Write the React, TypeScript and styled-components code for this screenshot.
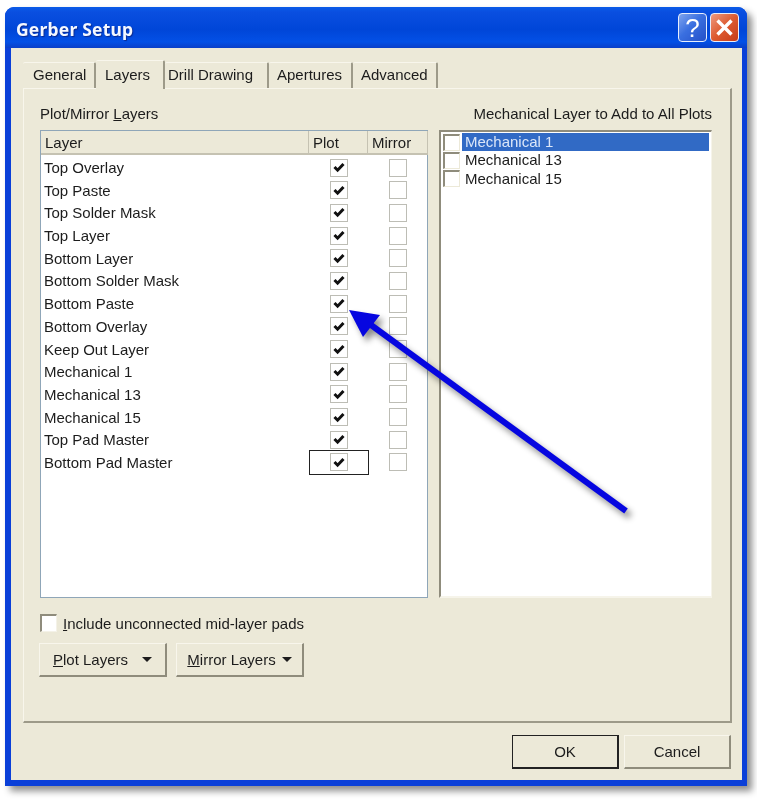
import React from 'react';
import styled, { createGlobalStyle } from 'styled-components';

const FONT = `"Liberation Sans", "DejaVu Sans", sans-serif`;

const GlobalStyle = createGlobalStyle`
  html, body {
    margin: 0;
    background: #ffffff;
  }
`;

const Page = styled.div`
  width: 757px;
  height: 799px;
  padding: 7px 10px 13px 5px;
  box-sizing: border-box;
  overflow: hidden;
  font-family: ${FONT};
  font-size: 15px;
  color: #1c1c1c;
  filter: blur(0.35px);
`;

const Window = styled.div`
  height: 100%;
  display: flex;
  flex-direction: column;
  padding: 0 5px 6px 6px;
  box-sizing: border-box;
  border-radius: 9px 9px 0 0;
  background: #0a3fd8;
  box-shadow: 5px 5px 7px rgba(0, 0, 0, 0.45);
`;

const TitleBar = styled.div`
  height: 41px;
  margin: 0 -5px 0 -6px;
  padding: 0 8px 0 11px;
  flex: none;
  display: flex;
  align-items: center;
  gap: 3px;
  border-radius: 9px 9px 0 0;
  background: linear-gradient(180deg, #0a5be8 0%, #0a4fe0 12%, #0046d8 55%, #0350e6 85%, #0a3fc8 100%);
`;

const Title = styled.div`
  flex: 1;
  margin-top: 3px;
  font-family: "Noto Sans", sans-serif;
  font-size: 17.5px;
  font-weight: 700;
  color: #f4f8ff;
  text-shadow: 1px 1px 1px #0a2a90;
  letter-spacing: 0.2px;
`;

const CaptionButton = styled.div<{ $tone: 'help' | 'close' }>`
  width: 29px;
  height: 29px;
  box-sizing: border-box;
  display: flex;
  align-items: center;
  justify-content: center;
  border: 1px solid #e8eefc;
  border-radius: 4px;
  font-size: 26px;
  line-height: 1;
  color: #ffffff;
  background: ${(p) =>
    p.$tone === 'help'
      ? 'linear-gradient(135deg, #7fa4ee 0%, #3a6fe0 45%, #2450c8 100%)'
      : 'linear-gradient(135deg, #ee9a80 0%, #dd5a30 50%, #c63c18 100%)'};
`;

const Client = styled.div`
  flex: 1;
  min-height: 0;
  display: flex;
  flex-direction: column;
  padding: 12px 10px 0 12px;
  background: #ece9d8;
`;

const TabStrip = styled.div`
  height: 28px;
  flex: none;
  display: flex;
  align-items: flex-end;
  position: relative;
  z-index: 1;
`;

const Tab = styled.div<{ $active?: boolean; $w: number; $pad: number }>`
  width: ${(p) => p.$w}px;
  height: ${(p) => (p.$active ? 29 : 26)}px;
  padding: 0 0 2px ${(p) => p.$pad}px;
  margin-bottom: ${(p) => (p.$active ? -1 : 0)}px;
  box-sizing: border-box;
  display: flex;
  align-items: center;
  white-space: nowrap;
  background: #ece9d8;
  border-top: 1px solid #f8f6ec;
  border-right: 2px solid #9d9a89;
  border-radius: 2px 2px 0 0;
`;

const Panel = styled.div`
  height: 635px;
  flex: none;
  position: relative;
  box-sizing: border-box;
  padding: 16px 19px 0 16px;
  background: #ece9d8;
  border-top: 1px solid #f8f6ec;
  border-left: 1px solid #f8f6ec;
  border-right: 2px solid #9d9a89;
  border-bottom: 2px solid #9d9a89;
`;

const Columns = styled.div`
  display: grid;
  grid-template-columns: 388px 273px;
  column-gap: 11px;
`;

const Caption = styled.div<{ $right?: boolean }>`
  height: 25px;
  line-height: 17px;
  white-space: nowrap;
  text-align: ${(p) => (p.$right ? 'right' : 'left')};
`;

const Key = styled.span`
  text-decoration: underline;
`;

const LayerList = styled.div`
  height: 468px;
  box-sizing: border-box;
  background: #ffffff;
  border: 1px solid #8fa6b8;
`;

const gridColumns = 'grid-template-columns: 268px 59px 60px;';

const HeaderRow = styled.div`
  height: 24px;
  box-sizing: border-box;
  display: grid;
  ${gridColumns}
  background: #ece9d8;
  border-bottom: 2px solid #c5c2b2;
`;

const HeaderCell = styled.div`
  padding-left: 4px;
  line-height: 24px;
  border-right: 1px solid #c5c2b2;
`;

const LayerRow = styled.div`
  height: 22.7px;
  display: grid;
  ${gridColumns}
  align-items: center;
`;

const LayerName = styled.div`
  padding-left: 3px;
  white-space: nowrap;
`;

const CheckCell = styled.div<{ $focus?: boolean }>`
  height: 25px;
  display: flex;
  align-items: center;
  justify-content: center;
  box-sizing: border-box;
  border: ${(p) => (p.$focus ? '1px solid #222222' : 'none')};
  margin-right: ${(p) => (p.$focus ? -1 : 0)}px;
`;

const CheckBox = styled.div`
  width: 18px;
  height: 18px;
  box-sizing: border-box;
  display: flex;
  align-items: center;
  justify-content: center;
  border: 1px solid #bdbdb5;
  background: #ffffff;
`;

const MechList = styled.div`
  height: 468px;
  box-sizing: border-box;
  padding: 1px 2px 0 2px;
  background: #ffffff;
  border-top: 2px solid #8f8c7c;
  border-left: 2px solid #8f8c7c;
  border-right: 1px solid #f6f4ea;
  border-bottom: 2px solid #f6f4ea;
`;

const MechRow = styled.div`
  height: 18.3px;
  display: flex;
  align-items: center;
  gap: 2px;
`;

const FlatBox = styled.div`
  width: 17px;
  height: 17px;
  flex: none;
  box-sizing: border-box;
  background: #ffffff;
  border-top: 2px solid #8f8c7c;
  border-left: 2px solid #8f8c7c;
  border-right: 1px solid #ece9d8;
  border-bottom: 1px solid #ece9d8;
`;

const MechName = styled.div<{ $selected?: boolean }>`
  flex: 1;
  height: 100%;
  padding-left: 3px;
  line-height: 18px;
  color: ${(p) => (p.$selected ? '#dbe6f8' : '#1c1c1c')};
  background: ${(p) => (p.$selected ? '#316ac5' : 'transparent')};
`;

const IncludeRow = styled.label`
  margin-top: 15px;
  height: 20px;
  display: flex;
  align-items: center;
  gap: 6px;
  white-space: nowrap;
`;

const SunkenBox = styled(FlatBox)`
  width: 17px;
  height: 18px;
  border-right-color: #f4f2e8;
  border-bottom-color: #f4f2e8;
`;

const ButtonRow = styled.div`
  margin-top: 10px;
  margin-left: -1px;
  display: flex;
  gap: 9px;
`;

const Button = styled.div<{ $w: number; $gap?: number; $default?: boolean }>`
  width: ${(p) => p.$w}px;
  height: 34px;
  box-sizing: border-box;
  display: flex;
  align-items: center;
  justify-content: center;
  gap: ${(p) => p.$gap ?? 0}px;
  white-space: nowrap;
  background: #ece9d8;
  border-top: 1px solid ${(p) => (p.$default ? '#222222' : '#f8f6ec')};
  border-left: 1px solid ${(p) => (p.$default ? '#222222' : '#f8f6ec')};
  border-right: 2px solid ${(p) => (p.$default ? '#222222' : '#8f8c7c')};
  border-bottom: 2px solid ${(p) => (p.$default ? '#222222' : '#8f8c7c')};
`;

const Caret = styled.span`
  width: 0;
  height: 0;
  border-left: 5px solid transparent;
  border-right: 5px solid transparent;
  border-top: 5px solid #1c1c1c;
`;

const Footer = styled.div`
  flex: 1;
  display: flex;
  justify-content: flex-end;
  align-items: flex-start;
  gap: 5px;
  padding: 12px 1px 0 0;
`;

const Arrow = styled.svg`
  position: absolute;
  left: 320px;
  top: 214px;
  width: 300px;
  height: 230px;
  overflow: visible;
  pointer-events: none;
  filter: drop-shadow(4px 5px 3px rgba(0, 0, 0, 0.45));
`;

const layers = [
  'Top Overlay',
  'Top Paste',
  'Top Solder Mask',
  'Top Layer',
  'Bottom Layer',
  'Bottom Solder Mask',
  'Bottom Paste',
  'Bottom Overlay',
  'Keep Out Layer',
  'Mechanical 1',
  'Mechanical 13',
  'Mechanical 15',
  'Top Pad Master',
  'Bottom Pad Master',
];

const mechanical = ['Mechanical 1', 'Mechanical 13', 'Mechanical 15'];

function Tick() {
  return (
    <svg width="12" height="11" viewBox="0 0 12 11">
      <path d="M1.5 5 L4.6 8.2 L10.5 2" fill="none" stroke="#111111" strokeWidth="3" />
    </svg>
  );
}

export default function App() {
  return (
    <Page>
      <GlobalStyle />
      <Window>
        <TitleBar>
          <Title>Gerber Setup</Title>
          <CaptionButton $tone="help">?</CaptionButton>
          <CaptionButton $tone="close">
            <svg width="19" height="19" viewBox="0 0 19 19">
              <path d="M2.5 2.5 L16.5 16.5 M16.5 2.5 L2.5 16.5" stroke="#ffffff" strokeWidth="3.4" />
            </svg>
          </CaptionButton>
        </TitleBar>
        <Client>
          <TabStrip>
            <Tab $w={73} $pad={10}>
              General
            </Tab>
            <Tab $w={69} $pad={9} $active>
              Layers
            </Tab>
            <Tab $w={104} $pad={3}>
              Drill Drawing
            </Tab>
            <Tab $w={84} $pad={8}>
              Apertures
            </Tab>
            <Tab $w={85} $pad={8}>
              Advanced
            </Tab>
          </TabStrip>
          <Panel>
            <Columns>
              <Caption>
                Plot/Mirror <Key>L</Key>ayers
              </Caption>
              <Caption $right>Mechanical Layer to Add to All Plots</Caption>
              <LayerList>
                <HeaderRow>
                  <HeaderCell>Layer</HeaderCell>
                  <HeaderCell>Plot</HeaderCell>
                  <HeaderCell>Mirror</HeaderCell>
                </HeaderRow>
                {layers.map((name, index) => (
                  <LayerRow key={name}>
                    <LayerName>{name}</LayerName>
                    <CheckCell $focus={index === layers.length - 1}>
                      <CheckBox>
                        <Tick />
                      </CheckBox>
                    </CheckCell>
                    <CheckCell>
                      <CheckBox />
                    </CheckCell>
                  </LayerRow>
                ))}
              </LayerList>
              <MechList>
                {mechanical.map((name, index) => (
                  <MechRow key={name}>
                    <FlatBox />
                    <MechName $selected={index === 0}>{name}</MechName>
                  </MechRow>
                ))}
              </MechList>
            </Columns>
            <IncludeRow>
              <SunkenBox />
              <span>
                <Key>I</Key>nclude unconnected mid-layer pads
              </span>
            </IncludeRow>
            <ButtonRow>
              <Button $w={128} $gap={14}>
                <span>
                  <Key>P</Key>lot Layers
                </span>
                <Caret />
              </Button>
              <Button $w={128} $gap={6}>
                <span>
                  <Key>M</Key>irror Layers
                </span>
                <Caret />
              </Button>
            </ButtonRow>
            <Arrow viewBox="0 0 300 230">
              <path d="M282 208 L27 22" stroke="#0606e0" strokeWidth="6" fill="none" />
              <path d="M5 7 L36 12 L19 34 Z" fill="#0606e0" />
            </Arrow>
          </Panel>
          <Footer>
            <Button $w={107} $default>
              OK
            </Button>
            <Button $w={107}>Cancel</Button>
          </Footer>
        </Client>
      </Window>
    </Page>
  );
}
